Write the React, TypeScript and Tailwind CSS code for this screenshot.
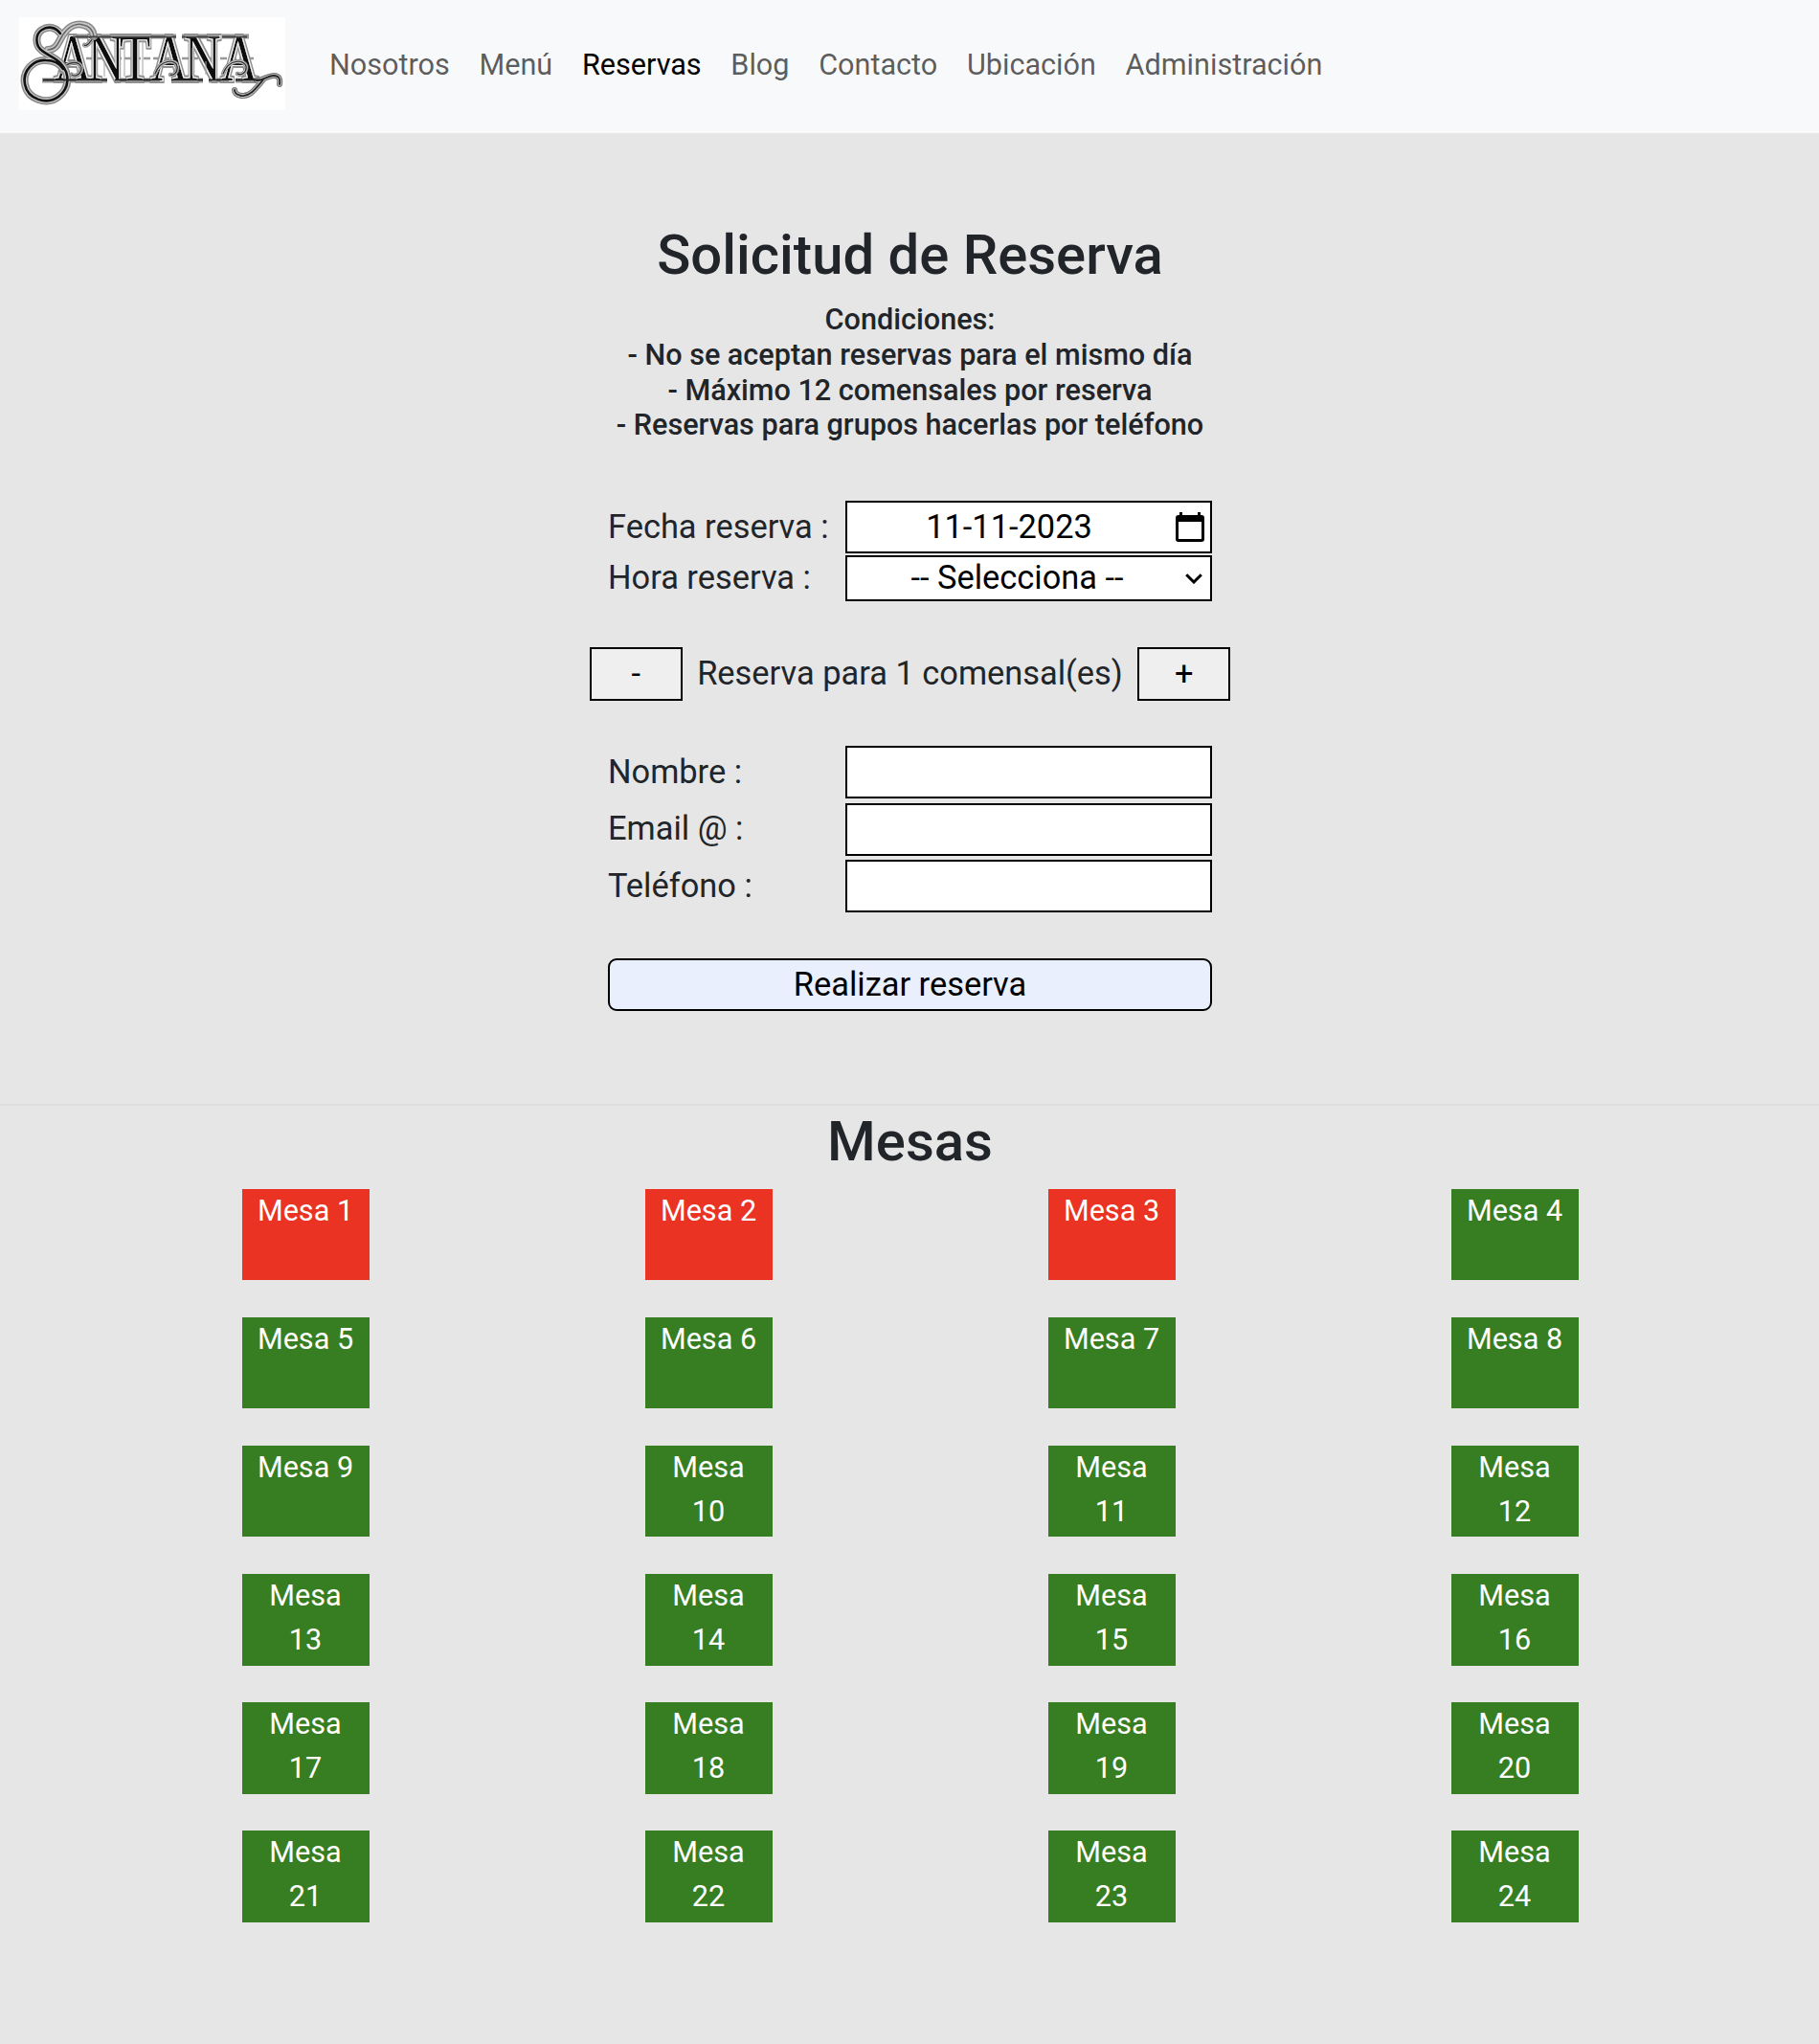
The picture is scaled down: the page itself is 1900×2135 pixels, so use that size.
import React from "react";

const links = ["Nosotros", "Menú", "Reservas", "Blog", "Contacto", "Ubicación", "Administración"];
const conditions = [
  "Condiciones:",
  "- No se aceptan reservas para el mismo día",
  "- Máximo 12 comensales por reserva",
  "- Reservas para grupos hacerlas por teléfono",
];
const contactFields = ["Nombre :", "Email @ :", "Teléfono :"];
const tables = Array.from({ length: 24 }, (_, i) => ({ id: i + 1, busy: i < 3 }));

const swirls = [
  "M63 35C58 28 50 27 44 31C36 36 37 48 44 53C50 58 58 60 64 67C73 77 73 92 61 101C49 110 29 104 26 88C23 73 36 62 48 63C56 63 62 66 66 72",
  "M50 52C60 52 61 43 66 36C72 27 80 24 87 26C93 27 97 31 98 38",
];
const hooks = [
  "M64 75C70 62 85 64 85 71C85 77 79 81 75 78",
  "M162 77C168 61 184 62 185 69C186 76 181 79 178 78",
  "M233 77C239 61 255 62 257 69C258 76 252 79 248 77",
  "M98 38C95 44 90 49 88 47",
];
const tail = "M268 84C275 84 280 79 286 79C291 79 293 82 292 88M276 82C266 94 261 101 252 100C247 99 245 97 245 94";

function Logo() {
  return (
    <svg
      viewBox="20 18 278 97"
      className="h-[97px] w-[278px] shrink-0 bg-white font-['Liberation_Serif',serif]"
      aria-label="Santana"
    >
      <defs>
        <filter id="inline" x="-5%" y="-20%" width="110%" height="140%">
          <feMorphology in="SourceAlpha" operator="dilate" radius="2.6" result="wide" />
          <feFlood floodColor="#909090" />
          <feComposite in2="wide" operator="in" result="rim" />
          <feMorphology in="SourceAlpha" operator="dilate" radius="1.4" result="narrow" />
          <feFlood floodColor="#f4f4f4" />
          <feComposite in2="narrow" operator="in" result="gap" />
          <feMerge>
            <feMergeNode in="rim" />
            <feMergeNode in="gap" />
            <feMergeNode in="SourceGraphic" />
          </feMerge>
        </filter>
      </defs>
      <g fill="none" stroke="#999">
        <path d="M44 84H112M120 84H167M179 84H212M218 84H239M246 84H272" strokeWidth="5" />
        <path d="M74 38H184M190 38H229M232 38H260" strokeWidth="5" />
        <path d="M90 61H265" strokeWidth="2.5" strokeDasharray="7 3" />
      </g>
      <text
        transform="scale(.77 1)"
        x="74 119 162 205 250 300"
        y="84"
        fontSize="69"
        filter="url(#inline)"
        className="fill-[#0a0a0a]"
      >
        ANTANA
      </text>
      <path
        d="M101 50V79M109 64V80M130 43V80M137 43V80M149 43V80M201 50V79M215 64V78"
        stroke="#a3a3a3"
        strokeWidth="1"
      />
      <g fill="none" strokeLinecap="round">
        {hooks.map((d) => (
          <React.Fragment key={d}>
            <path d={d} stroke="#8a8a8a" strokeWidth="4.5" />
            <path d={d} stroke="#ddd" strokeWidth="2.6" />
            <path d={d} stroke="#333" strokeWidth="1.4" />
          </React.Fragment>
        ))}
        {swirls.map((d) => (
          <path key={d} d={d} stroke="#8a8a8a" strokeWidth="8" />
        ))}
        {swirls.map((d) => (
          <path key={d} d={d} stroke="#c8c8c8" strokeWidth="5" />
        ))}
        {swirls.map((d, i) => (
          <path key={d} d={d} stroke={i ? "#666" : "#111"} strokeWidth={i ? 1.6 : 2.6} />
        ))}
        <path d={tail} stroke="#777" strokeWidth="6" />
        <path d={tail} stroke="#ccc" strokeWidth="3.6" />
        <path d={tail} stroke="#222" strokeWidth="1.8" />
      </g>
      <path
        d="M45 83.5H112M120 83.5H167M179 83.5H212M218 83.5H239M246 83.5H272"
        stroke="#222"
        strokeWidth="2"
      />
      <path d="M76 38.5H184M190 38.5H229M232 38.5H258" stroke="#444" strokeWidth="2" />
    </svg>
  );
}

function Label({ children }: { children: React.ReactNode }) {
  return <label className="w-[248px] shrink-0 pb-[2px] leading-[52px]">{children}</label>;
}

export default function App() {
  return (
    <div className="h-[2135px] w-full overflow-hidden bg-[#e6e6e6] font-[Roboto,sans-serif] text-[#212529]">
      <nav className="flex h-[139px] items-center bg-[#f8f9fa] pb-[6px] pl-[20px]">
        <Logo />
        <ul className="ml-[46px] flex gap-[30.7px] pt-[2px] text-[30.6px] leading-[46px]">
          {links.map((l) => (
            <li key={l} className={l === "Reservas" ? "text-black" : "text-black/65"}>
              {l}
            </li>
          ))}
        </ul>
      </nav>

      <main className="pl-[1px]">
        <section className="flex h-[1014px] flex-col items-center pt-[92px]">
          <h2 className="text-[58px] leading-[70px] font-medium">Solicitud de Reserva</h2>
          <div className="mt-[15px] text-center text-[30.6px] leading-[36.8px] font-medium">
            {conditions.map((c) => (
              <p key={c}>{c}</p>
            ))}
          </div>

          <form className="mt-[60px] flex w-[631px] flex-col items-center text-[34.4px]">
            <div className="flex h-[55px] w-full items-center">
              <Label>Fecha reserva :</Label>
              <div className="flex h-full flex-1 items-center border-2 border-black bg-white pr-[6px] text-black">
                <span className="flex-1 pr-[5px] pb-[2px] text-center leading-[48px]">11-11-2023</span>
                <svg viewBox="0 0 30 31" className="h-[31px] w-[30px]">
                  <path
                    fillRule="evenodd"
                    d="M4 0h3v3h16V0h3v3h1a3 3 0 0 1 3 3v22a3 3 0 0 1-3 3H3a3 3 0 0 1-3-3V6a3 3 0 0 1 3-3h1zM3 10v18h24V10z"
                  />
                </svg>
              </div>
            </div>
            <div className="mt-[2px] flex h-[48px] w-full items-center">
              <Label>Hora reserva :</Label>
              <div className="flex h-full flex-1 items-center border-2 border-black bg-white pr-[8px] pl-[2px] text-black">
                <span className="flex-1 pb-[2px] text-center leading-[42px]">-- Selecciona --</span>
                <svg viewBox="0 0 18 11" className="h-[11px] w-[18px]" fill="none" stroke="currentColor" strokeWidth="3">
                  <path d="M1.2 1.2 9 9l7.8-7.8" />
                </svg>
              </div>
            </div>

            <div className="mt-[48px] flex items-center">
              <button type="button" className="h-[56px] w-[97px] border-2 border-black bg-[#efefef] pb-[3px] text-black">
                -
              </button>
              <span className="px-[15.5px] pb-[2px] leading-[52px] whitespace-nowrap">Reserva para 1 comensal(es)</span>
              <button type="button" className="h-[56px] w-[97px] border-2 border-black bg-[#efefef] pb-[3px] text-black">
                +
              </button>
            </div>

            <div className="mt-[47px] flex w-full flex-col gap-[4.5px]">
              {contactFields.map((f) => (
                <div key={f} className="flex h-[55px] items-center">
                  <Label>{f}</Label>
                  <input className="h-full min-w-0 flex-1 border-2 border-black bg-white px-2" />
                </div>
              ))}
            </div>

            <button
              type="button"
              className="mt-[48px] h-[55px] w-full rounded-[9px] border-2 border-black bg-[#e9effc] pb-[3px] text-black"
            >
              Realizar reserva
            </button>
          </form>
        </section>

        <section className="-ml-[1px] border-t-2 border-[#dddede] pt-[2px] pl-[1px]">
          <h2 className="text-center text-[58px] leading-[70px] font-medium">Mesas</h2>
          <div className="mx-auto mt-[14.5px] grid w-[1684px] grid-cols-4 justify-items-center gap-y-[38.3px]">
            {tables.map((t) => (
              <div
                key={t.id}
                className={`h-[95.8px] w-[133px] px-[10px] text-center text-[30.6px] leading-[46px] text-white ${
                  t.busy ? "bg-[#ea3323]" : "bg-[#377e22]"
                }`}
              >
                Mesa {t.id}
              </div>
            ))}
          </div>
        </section>
      </main>
    </div>
  );
}
